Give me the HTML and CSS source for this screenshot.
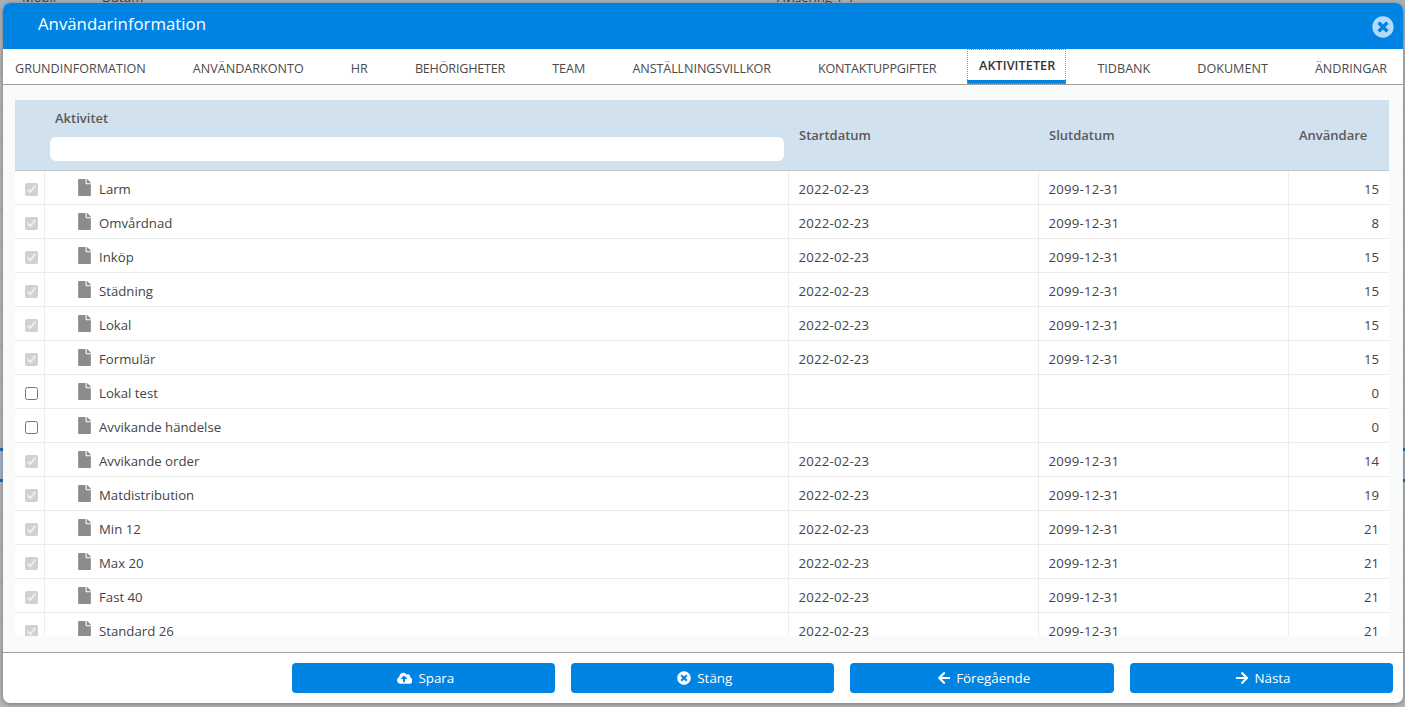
FILE: index.html
```html
<!DOCTYPE html>
<html>
<head>
    <title>Användarinformation</title>
    <link rel="stylesheet" href="styles.css">
</head>
<body>
    <div class="page">
        <div class="page-head">
            <span class="col-mobil">Mobil</span>
            <span class="col-datum">Datum</span>
            <span class="col-avisering">Avisering 1-1</span>
        </div>
        <div class="page-row"></div><div class="page-row"></div><div class="page-row"></div>
        <div class="page-row"></div><div class="page-row"></div><div class="page-row"></div>
        <div class="page-row"></div><div class="page-row"></div><div class="page-row"></div>
        <div class="page-row"></div><div class="page-row"></div><div class="page-row"></div>
        <div class="page-row page-row-selected"></div>
        <div class="page-row"></div><div class="page-row"></div><div class="page-row"></div>
        <div class="page-row"></div><div class="page-row"></div><div class="page-row"></div>
    </div>

    <div class="modal">
        <div class="modal-header">
            <h1 class="modal-title">Användarinformation</h1>
            <svg class="modal-close" viewBox="0 0 512 512"><path d="M256 8C119 8 8 119 8 256s111 248 248 248 248-111 248-248S393 8 256 8zm121.6 313.1c4.7 4.7 4.7 12.3 0 17L338 377.6c-4.7 4.7-12.3 4.7-17 0L256 312l-65.1 65.6c-4.7 4.7-12.3 4.7-17 0L134.4 338c-4.7-4.7-4.7-12.3 0-17l65.6-65-65.6-65.1c-4.7-4.7-4.7-12.3 0-17l39.6-39.6c4.7-4.7 12.3-4.7 17 0l65 65.7 65.1-65.6c4.7-4.7 12.3-4.7 17 0l39.6 39.6c4.7 4.7 4.7 12.3 0 17L312 256l65.6 65.1z"/></svg>
        </div>

        <div class="tabs">
            <div class="tab">GRUNDINFORMATION</div>
            <div class="tab">ANVÄNDARKONTO</div>
            <div class="tab">HR</div>
            <div class="tab tab-narrow">BEHÖRIGHETER</div>
            <div class="tab">TEAM</div>
            <div class="tab tab-slim">ANSTÄLLNINGSVILLKOR</div>
            <div class="tab tab-narrow">KONTAKTUPPGIFTER</div>
            <div class="tab tab-active">AKTIVITETER</div>
            <div class="tab">TIDBANK</div>
            <div class="tab">DOKUMENT</div>
            <div class="tab">ÄNDRINGAR</div>
        </div>

        <div class="modal-body">
            <div class="table-wrap">
                <table class="grid">
                    <thead>
                        <tr>
                            <th class="col-check"></th>
                            <th class="col-name">
                                <div class="name-label">Aktivitet</div>
                                <input type="text" class="name-search">
                            </th>
                            <th class="col-date">Startdatum</th>
                            <th class="col-date">Slutdatum</th>
                            <th class="col-users">Användare</th>
                        </tr>
                    </thead>
                    <tbody id="rows"></tbody>
                </table>
            </div>
        </div>

        <div class="modal-footer">
            <button class="btn">
                <svg class="btn-icon btn-icon-cloud" viewBox="0 0 640 512"><path d="M537.6 226.6c4.1-10.7 6.4-22.4 6.4-34.6 0-53-43-96-96-96-19.7 0-38.1 6-53.3 16.2C367 64.2 315.3 32 256 32c-88.4 0-160 71.6-160 160 0 2.7.1 5.4.2 8.1C40.2 219.8 0 273.2 0 336c0 79.5 64.5 144 144 144h368c70.7 0 128-57.3 128-128 0-61.9-44-113.6-102.4-125.4zM393.4 288H328v112c0 8.8-7.2 16-16 16h-48c-8.8 0-16-7.2-16-16V288h-65.4c-14.3 0-21.4-17.2-11.3-27.3l105.4-105.4c6.2-6.2 16.4-6.2 22.6 0l105.4 105.4c10.1 10.1 2.9 27.3-11.3 27.3z"/></svg>
                Spara
            </button>
            <button class="btn">
                <svg class="btn-icon" viewBox="0 0 512 512"><path d="M256 8C119 8 8 119 8 256s111 248 248 248 248-111 248-248S393 8 256 8zm121.6 313.1c4.7 4.7 4.7 12.3 0 17L338 377.6c-4.7 4.7-12.3 4.7-17 0L256 312l-65.1 65.6c-4.7 4.7-12.3 4.7-17 0L134.4 338c-4.7-4.7-4.7-12.3 0-17l65.6-65-65.6-65.1c-4.7-4.7-4.7-12.3 0-17l39.6-39.6c4.7-4.7 12.3-4.7 17 0l65 65.7 65.1-65.6c4.7-4.7 12.3-4.7 17 0l39.6 39.6c4.7 4.7 4.7 12.3 0 17L312 256l65.6 65.1z"/></svg>
                Stäng
            </button>
            <button class="btn">
                <svg class="btn-icon" viewBox="0 0 448 512"><path d="M257.5 445.1l-22.2 22.2c-9.4 9.4-24.6 9.4-33.9 0L7 273c-9.4-9.4-9.4-24.6 0-33.9L201.4 44.7c9.4-9.4 24.6-9.4 33.9 0l22.2 22.2c9.5 9.5 9.3 25-.4 34.3L136.6 216H424c13.3 0 24 10.7 24 24v32c0 13.3-10.7 24-24 24H136.6l120.5 114.8c9.8 9.3 10 24.8.4 34.3z"/></svg>
                Föregående
            </button>
            <button class="btn">
                <svg class="btn-icon" viewBox="0 0 448 512"><path d="M190.5 66.9l22.2-22.2c9.4-9.4 24.6-9.4 33.9 0L441 239c9.4 9.4 9.4 24.6 0 33.9L246.6 467.3c-9.4 9.4-24.6 9.4-33.9 0l-22.2-22.2c-9.5-9.5-9.3-25 .4-34.3L311.4 296H24c-13.3 0-24-10.7-24-24v-32c0-13.3 10.7-24 24-24h287.4L190.9 101.2c-9.8-9.3-10-24.8-.4-34.3z"/></svg>
                Nästa
            </button>
        </div>
    </div>

    <script>
        const activities = [
            { name: "Larm", start: "2022-02-23", end: "2099-12-31", users: 15, active: true },
            { name: "Omvårdnad", start: "2022-02-23", end: "2099-12-31", users: 8, active: true },
            { name: "Inköp", start: "2022-02-23", end: "2099-12-31", users: 15, active: true },
            { name: "Städning", start: "2022-02-23", end: "2099-12-31", users: 15, active: true },
            { name: "Lokal", start: "2022-02-23", end: "2099-12-31", users: 15, active: true },
            { name: "Formulär", start: "2022-02-23", end: "2099-12-31", users: 15, active: true },
            { name: "Lokal test", start: "", end: "", users: 0, active: false },
            { name: "Avvikande händelse", start: "", end: "", users: 0, active: false },
            { name: "Avvikande order", start: "2022-02-23", end: "2099-12-31", users: 14, active: true },
            { name: "Matdistribution", start: "2022-02-23", end: "2099-12-31", users: 19, active: true },
            { name: "Min 12", start: "2022-02-23", end: "2099-12-31", users: 21, active: true },
            { name: "Max 20", start: "2022-02-23", end: "2099-12-31", users: 21, active: true },
            { name: "Fast 40", start: "2022-02-23", end: "2099-12-31", users: 21, active: true },
            { name: "Standard 26", start: "2022-02-23", end: "2099-12-31", users: 21, active: true }
        ];

        const fileIcon = `<svg class="file-icon" viewBox="0 0 384 512"><path d="M224 136V0H24C10.7 0 0 10.7 0 24v464c0 13.3 10.7 24 24 24h336c13.3 0 24-10.7 24-24V160H248c-13.2 0-24-10.8-24-24zm160-14.1v6.1H256V0h6.1c6.4 0 12.5 2.5 17 7l97.9 98c4.5 4.5 7 10.6 7 16.9z"/></svg>`;

        // Fill the table from the data above
        const tableBody = document.getElementById("rows");
        activities.forEach(a => {
            const row = document.createElement("tr");
            row.innerHTML = `
                <td class="cell-check"><input type="checkbox" ${a.active ? "checked disabled" : ""}></td>
                <td class="cell-name"><span class="name-wrap">${fileIcon}${a.name}</span></td>
                <td class="cell-date">${a.start}</td>
                <td class="cell-date">${a.end}</td>
                <td class="cell-users">${a.users}</td>
            `;
            tableBody.appendChild(row);
        });
    </script>
</body>
</html>
```

FILE: styles.css
```css
* {
    box-sizing: border-box;
}

html, body {
    height: 100%;
}

body {
    margin: 0;
    overflow: hidden;
    background-color: #b3b5b9;
    font-family: "Open Sans", "Noto Sans", sans-serif;
    font-size: 13px;
    color: #444;
}

/* page behind the dialog */
.page {
    margin-top: -14px;
}

.page-head {
    display: flex;
    height: 53px;
    background-color: #a9b0b6;
    border-bottom: 1px solid #a6a9ad;
    color: #3a3d40;
    font-size: 13px;
    line-height: 22px;
}

.col-mobil {
    margin-left: 22px;
    width: 80px;
}

.col-datum {
    width: 675px;
}

.page-row {
    height: 34px;
    border-bottom: 1px solid #a6a9ad;
}

.page-row-selected {
    margin-top: 1px;
    background-color: #a3b3c6;
    border-top: 3px solid #1a6cb8;
    border-bottom: 3px solid #1a6cb8;
}

/* dialog */
.modal {
    position: absolute;
    top: 3px;
    left: 3px;
    right: 2px;
    bottom: 4px;
    display: flex;
    flex-direction: column;
    background-color: #fff;
    border-radius: 7px;
    overflow: hidden;
    box-shadow: 0 1px 5px rgba(0, 0, 0, 0.35);
}

.modal-header {
    display: flex;
    flex: none;
    justify-content: space-between;
    align-items: center;
    height: 46px;
    padding: 0 9px 0 35px;
    background-color: #0084e3;
}

.modal-title {
    margin: 0 0 6px 0;
    font-size: 16.8px;
    font-weight: 400;
    color: #fff;
}

.modal-close {
    width: 22px;
    height: 22px;
    margin-top: 2px;
    fill: #b3dafa;
}

/* tabs */
.tabs {
    display: flex;
    flex: none;
    gap: 15px;
    height: 36px;
    border-bottom: 1px solid #a0a0a0;
}

.tab {
    padding: 4px 16px 0 16px;
    line-height: 32px;
    font-size: 12.6px;
    color: #4a4a4a;
    white-space: nowrap;
}

.tab:first-child {
    padding-left: 12px;
}

.tab-narrow {
    letter-spacing: -0.2px;
}

.tab-slim {
    letter-spacing: -0.1px;
}

.tab-active {
    height: 35px;
    padding: 1px 11px 0 11.5px;
    line-height: 32px;
    font-weight: 600;
    letter-spacing: 0.1px;
    color: #333;
    outline: 1px dotted #999;
    outline-offset: -1px;
    border-bottom: 4px solid #0084e3;
}

/* table */
.modal-body {
    flex: 1;
    min-height: 0;
    padding: 15px 14px 16px 12px;
    background-color: #f9fbfb;
    border-bottom: 1px solid #a0a0a0;
}

.table-wrap {
    height: 100%;
    overflow: hidden;
    background-color: #fff;
}

.grid {
    width: 100%;
    border-collapse: collapse;
    table-layout: fixed;
}

.grid th {
    height: 70px;
    padding: 1px 10px 0 11px;
    background-color: #d2e1ee;
    border-bottom: 1px solid #bcc3c9;
    font-size: 13px;
    font-weight: 600;
    color: #5a5a5a;
    text-align: left;
}

.grid td {
    height: 34px;
    padding: 4px 10px 0 10px;
    border-bottom: 1px solid #ececec;
    border-right: 1px solid #ececec;
    font-size: 13.2px;
    white-space: nowrap;
}

.grid td:last-child {
    border-right: none;
}

.grid th.col-check {
    width: 29px;
}

.grid th.col-name {
    padding: 1px 4px 0 6px;
}

.grid th.col-date {
    width: 250px;
}

.grid th.col-users {
    width: 101px;
}

.name-label {
    margin: 0 0 10px 5px;
}

.name-search {
    display: block;
    width: 100%;
    height: 24px;
    border: none;
    border-radius: 6px;
    background-color: #fff;
}

.grid td.cell-check {
    padding: 4px 0 0 10px;
}

.cell-check input {
    display: block;
    margin: 0;
}

.grid td.cell-name {
    padding-left: 33px;
}

.name-wrap {
    display: flex;
    align-items: center;
    gap: 8.5px;
}

.file-icon {
    width: 13px;
    height: 17px;
    margin-top: -3px;
    fill: #8c8c8c;
}

.cell-date {
    padding-left: 10.5px;
    letter-spacing: 0.2px;
}

.cell-users {
    text-align: right;
}

/* footer buttons */
.modal-footer {
    display: grid;
    flex: none;
    grid-template-columns: repeat(4, 1fr);
    gap: 16px;
    height: 50px;
    padding: 10px 10px 10px 288.9px;
}

.btn {
    display: flex;
    justify-content: center;
    align-items: center;
    gap: 6px;
    height: 30px;
    padding: 0 0 0 4px;
    border: none;
    border-radius: 4px;
    background-color: #0084e3;
    color: #fff;
    font-family: inherit;
    font-size: 13.4px;
}

.btn-icon {
    height: 14px;
    width: auto;
    fill: #fff;
}

.btn-icon-cloud {
    height: 12.5px;
}
```
